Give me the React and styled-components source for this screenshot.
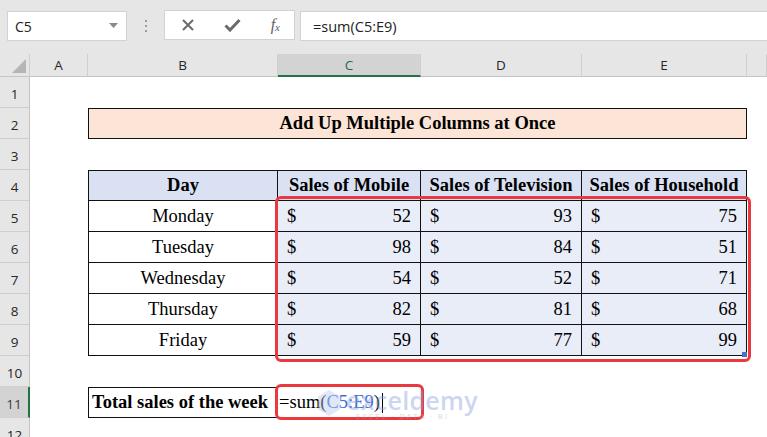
import React from 'react'
import styled, { createGlobalStyle } from 'styled-components'

const sales = [
  { day: 'Monday', mobile: 52, tv: 93, house: 75 },
  { day: 'Tuesday', mobile: 98, tv: 84, house: 51 },
  { day: 'Wednesday', mobile: 54, tv: 52, house: 71 },
  { day: 'Thursday', mobile: 82, tv: 81, house: 68 },
  { day: 'Friday', mobile: 59, tv: 77, house: 99 },
]

const letters = ['A', 'B', 'C', 'D', 'E', '']

function App() {
  return (
    <>
      <GlobalStyle />
      <Window>
        <Toolbar>
          <NameBox>
            C5
            <svg width="9" height="6" viewBox="0 0 9 6"><path d="M0 0h9L4.5 5z" fill="#8a8a8a" /></svg>
          </NameBox>
          <Grip>
            <span /><span /><span />
          </Grip>
          <IconBox>
            <svg width="14" height="14" viewBox="0 0 14 14">
              <path d="M2 2l10 10M12 2L2 12" stroke="#6b6b6b" strokeWidth="2" />
            </svg>
            <svg width="17" height="14" viewBox="0 0 17 14">
              <path d="M1.5 7.5l4.5 4.5L15.5 2" stroke="#6b6b6b" strokeWidth="3" fill="none" />
            </svg>
            <Fx>f<sub>x</sub></Fx>
          </IconBox>
          <FormulaBox>=sum(C5:E9)</FormulaBox>
        </Toolbar>

        <Sheet>
          <Corner>
            <svg width="14" height="14" viewBox="0 0 14 14"><path d="M14 0v14H0z" fill="#b5b5b5" /></svg>
          </Corner>
          {letters.map((l, i) => (
            <ColHead key={i} $col={i + 2} $active={l === 'C'}>{l}</ColHead>
          ))}
          {Array.from({ length: 12 }, (_, i) => (
            <RowHead key={i} $row={i + 2} $active={i + 1 === 11}>{i + 1}</RowHead>
          ))}

          <Cell $col={3} $span={4} $row={3} $bg="#fce4d6" $top $first $bold>
            Add Up Multiple Columns at Once
          </Cell>

          <Cell $col={3} $row={5} $bg="#d9e1f2" $top $first $bold>Day</Cell>
          <Cell $col={4} $row={5} $bg="#d9e1f2" $top $bold>Sales of Mobile</Cell>
          <Cell $col={5} $row={5} $bg="#d9e1f2" $top $bold>Sales of Television</Cell>
          <Cell $col={6} $row={5} $bg="#d9e1f2" $top $bold>Sales of Household</Cell>

          {sales.map((s, i) => (
            <React.Fragment key={s.day}>
              <Cell $col={3} $row={i + 6} $first>{s.day}</Cell>
              {[s.mobile, s.tv, s.house].map((v, j) => (
                <Cell key={j} $col={4 + j} $row={i + 6} $bg="#e8edf8" $justify="space-between">
                  <span>$</span>
                  <span>{v}</span>
                </Cell>
              ))}
            </React.Fragment>
          ))}

          <Cell $col={3} $row={12} $top $first $bold $justify="flex-start" $pad="0 0 0 3px">
            Total sales of the week
          </Cell>
          <Formula $col={4} $row={12}>
            =sum(<Ref>C5:E9</Ref>)<Caret />
          </Formula>

          <Highlight $col={4} $span={3} $row={6} $rows={5} $margin="-5px -4px -6px -3px">
            <Handle />
          </Highlight>
          <Highlight $col={4} $span={1} $row={12} $rows={1} $margin="-3px -3px -2px -3px" />

          <Watermark $col={4} $row={12}>
            <svg width="30" height="30" viewBox="0 0 30 30">
              <path d="M15 2l11 6.5v13L15 28 4 21.5v-13z" fill="#bccbef" />
            </svg>
            <Brand>
              <BrandName>exceldemy</BrandName>
              <BrandTag>EXCEL · DATA · BI</BrandTag>
            </Brand>
          </Watermark>
        </Sheet>
      </Window>
    </>
  )
}

export default App

const GlobalStyle = createGlobalStyle`
  body {
    margin: 0;
    overflow: hidden;
    background: #fff;
  }
`

const Window = styled.div`
  width: 767px;
  height: 437px;
  overflow: hidden;
  display: flex;
  flex-direction: column;
`

const Toolbar = styled.div`
  height: 54px;
  flex-shrink: 0;
  background: #e6e6e6;
  display: flex;
  align-items: flex-start;
  padding: 11px 0 0 7px;
  box-sizing: border-box;
  font-family: "Open Sans", "Noto Sans", sans-serif;
`

const NameBox = styled.div`
  width: 120px;
  height: 30px;
  box-sizing: border-box;
  background: #fff;
  border: 1px solid #d2d2d2;
  display: flex;
  align-items: center;
  justify-content: space-between;
  padding: 0 8px 0 7px;
  font-size: 14px;
  color: #222;
`

const Grip = styled.div`
  width: 37px;
  height: 30px;
  display: flex;
  flex-direction: column;
  align-items: center;
  justify-content: center;
  gap: 3px;

  span {
    width: 2px;
    height: 2px;
    background: #9c9c9c;
  }
`

const IconBox = styled.div`
  width: 131px;
  height: 30px;
  margin-top: -1px;
  box-sizing: border-box;
  background: #fff;
  border: 1px solid #d2d2d2;
  display: flex;
  align-items: center;
  justify-content: space-between;
  padding: 0 14px 0 16px;
`

const Fx = styled.span`
  font-family: "Liberation Serif", serif;
  font-style: italic;
  font-size: 16px;
  color: #5e5e5e;

  sub {
    font-size: 11px;
    vertical-align: -1px;
  }
`

const FormulaBox = styled.div`
  flex: 1;
  height: 30px;
  margin-left: 5px;
  box-sizing: border-box;
  background: #fff;
  border: 1px solid #d2d2d2;
  border-right: none;
  display: flex;
  align-items: center;
  padding-left: 12px;
  font-size: 14.5px;
  color: #222;
`

const Sheet = styled.div`
  display: grid;
  grid-template-columns: 30px 58px 190px 143px 161px 165px 1fr;
  grid-template-rows: 23px repeat(12, 31px);
  background: #fff;
  position: relative;
`

const Corner = styled.div`
  grid-column: 1;
  grid-row: 1;
  background: #e6e6e6;
  border-right: 1px solid #cfcfcf;
  border-bottom: 1px solid #c4c4c4;
  display: flex;
  align-items: flex-end;
  justify-content: flex-end;
  padding: 0 3px 3px 0;
`

const ColHead = styled.div`
  grid-column: ${p => p.$col};
  grid-row: 1;
  background: ${p => (p.$active ? '#d3d3d3' : '#e6e6e6')};
  border-right: 1px solid #cfcfcf;
  border-bottom: ${p => (p.$active ? '2px solid #217346' : '1px solid #c4c4c4')};
  display: flex;
  align-items: center;
  justify-content: center;
  font-family: "Open Sans", "Noto Sans", sans-serif;
  font-size: 13.5px;
  color: ${p => (p.$active ? '#1e6b43' : '#262626')};
`

const RowHead = styled.div`
  grid-column: 1;
  grid-row: ${p => p.$row};
  background: ${p => (p.$active ? '#d3d3d3' : '#e6e6e6')};
  border-right: ${p => (p.$active ? '2px solid #217346' : '1px solid #c4c4c4')};
  border-bottom: 1px solid #cfcfcf;
  display: flex;
  align-items: center;
  justify-content: center;
  padding-top: 4px;
  font-family: "Open Sans", "Noto Sans", sans-serif;
  font-size: 13.5px;
  color: ${p => (p.$active ? '#3c3c3c' : '#262626')};
`

const Cell = styled.div`
  grid-column: ${p => p.$col} / span ${p => p.$span || 1};
  grid-row: ${p => p.$row};
  display: flex;
  align-items: center;
  justify-content: ${p => p.$justify || 'center'};
  padding: ${p => p.$pad || '0 9px'};
  background: ${p => p.$bg || '#fff'};
  border-right: 1px solid #111;
  border-bottom: 1px solid #111;
  border-left: ${p => (p.$first ? '1px solid #111' : 'none')};
  border-top: ${p => (p.$top ? '1px solid #111' : 'none')};
  font-family: "Liberation Serif", "Times New Roman", serif;
  font-size: 18.5px;
  font-weight: ${p => (p.$bold ? 700 : 400)};
  color: #000;
  white-space: nowrap;
  overflow: hidden;
`

const Formula = styled.div`
  grid-column: ${p => p.$col};
  grid-row: ${p => p.$row};
  display: flex;
  align-items: center;
  padding-left: 1px;
  font-family: "Liberation Serif", "Times New Roman", serif;
  font-size: 18.5px;
  color: #000;
  white-space: nowrap;
`

const Ref = styled.span`
  color: #3f6fd1;
`

const Caret = styled.span`
  width: 1px;
  height: 20px;
  background: #000;
  margin-left: 2px;
`

const Highlight = styled.div`
  grid-column: ${p => p.$col} / span ${p => p.$span};
  grid-row: ${p => p.$row} / span ${p => p.$rows};
  margin: ${p => p.$margin};
  border: 3.5px solid #e9393f;
  border-radius: 6px;
  pointer-events: none;
  z-index: 2;
  position: relative;
`

const Handle = styled.span`
  position: absolute;
  right: 1px;
  bottom: 2px;
  width: 5px;
  height: 5px;
  background: #4a6fc7;
`

const Watermark = styled.div`
  grid-column: ${p => p.$col} / span 2;
  grid-row: ${p => p.$row};
  display: flex;
  align-items: center;
  gap: 2px;
  padding-left: 36px;
  opacity: 0.45;
  z-index: 3;
  pointer-events: none;
`

const Brand = styled.div`
  display: flex;
  flex-direction: column;
  line-height: 1;
  margin-top: 4px;
`

const BrandName = styled.span`
  font-family: "Open Sans", "Noto Sans", sans-serif;
  font-size: 25px;
  font-weight: 600;
  color: #8fa6df;
  letter-spacing: 0.3px;
`

const BrandTag = styled.span`
  font-family: "Open Sans", "Noto Sans", sans-serif;
  font-size: 7.5px;
  color: #a8a8a8;
  letter-spacing: 2px;
  margin-left: 10px;
`
